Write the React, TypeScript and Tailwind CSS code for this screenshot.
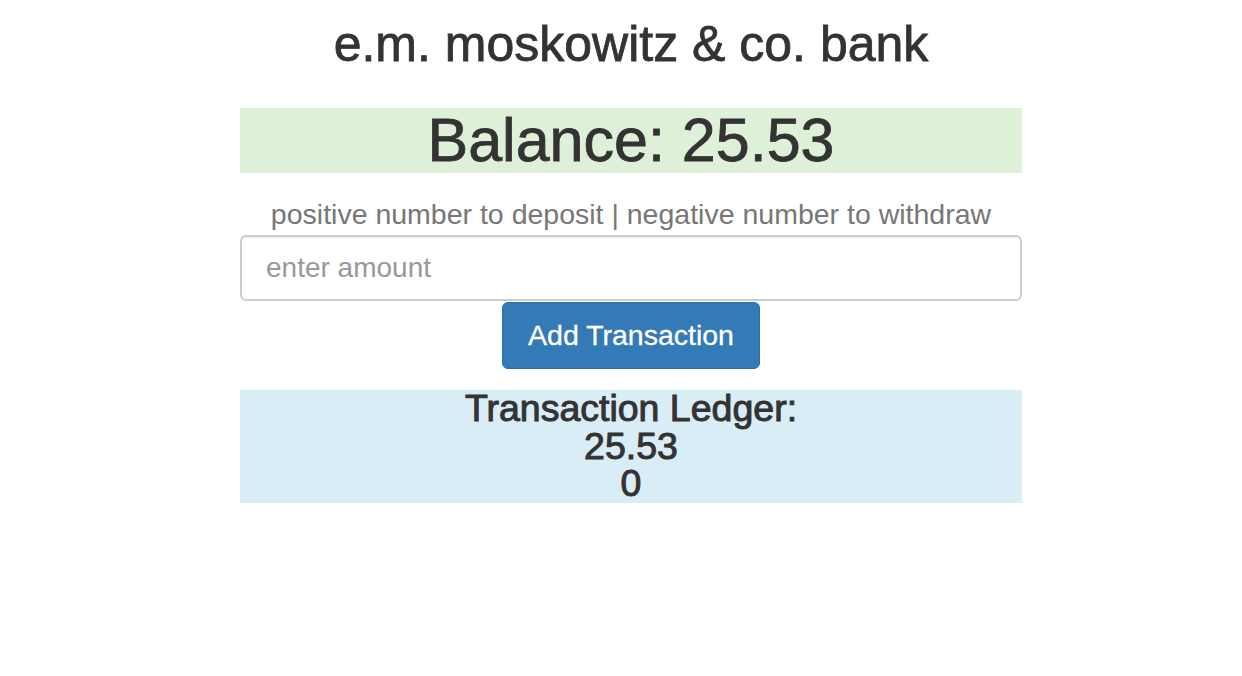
import { useState } from "react";

export default function App() {
  const [amount, setAmount] = useState("");
  const [ledger, setLedger] = useState<number[]>([25.53, 0]);
  const balance = ledger.reduce((a, b) => a + b, 0);

  const addTransaction = () => {
    const n = parseFloat(amount);
    if (isNaN(n)) return;
    setLedger([n, ...ledger]);
    setAmount("");
  };

  return (
    <div className="min-h-screen bg-white text-[#333] font-['Liberation_Sans',Arial,sans-serif]">
      <div className="ml-[240px] w-[782px] pt-[17px] text-center">
        <h1 className="text-[50px] leading-[55px] [-webkit-text-stroke:0.8px_#333]">e.m. moskowitz &amp; co. bank</h1>

        <div className="mt-[36px] h-[65px] bg-[#dff0d8] text-[61px] leading-[65px] [-webkit-text-stroke:0.8px_#333]">
          Balance: {balance.toFixed(2)}
        </div>

        <p className="mt-[20px] text-[28.5px] leading-[42px] text-[#777]">
          positive number to deposit | negative number to withdraw
        </p>

        <input
          type="text"
          value={amount}
          onChange={e => setAmount(e.target.value)}
          placeholder="enter amount"
          className="block h-[66px] w-full rounded-[6px] border-2 border-[#ccc] px-[24px] text-[28px] text-[#555] shadow-[inset_0_1px_1px_rgba(0,0,0,0.075)] outline-none placeholder:text-[#999]"
        />

        <button
          onClick={addTransaction}
          className="mt-[1px] h-[67px] w-[258px] rounded-[6px] border border-[#2e6da4] bg-[#337ab7] text-[28.5px] text-white [-webkit-text-stroke:0.3px_#fff]"
        >
          Add Transaction
        </button>

        <div className="mt-[21px] bg-[#d9edf7] text-[37.5px] leading-[37.7px] [-webkit-text-stroke:1px_#333]">
          <div>Transaction Ledger:</div>
          {ledger.map((t, i) => (
            <div key={i}>{t}</div>
          ))}
        </div>
      </div>
    </div>
  );
}
